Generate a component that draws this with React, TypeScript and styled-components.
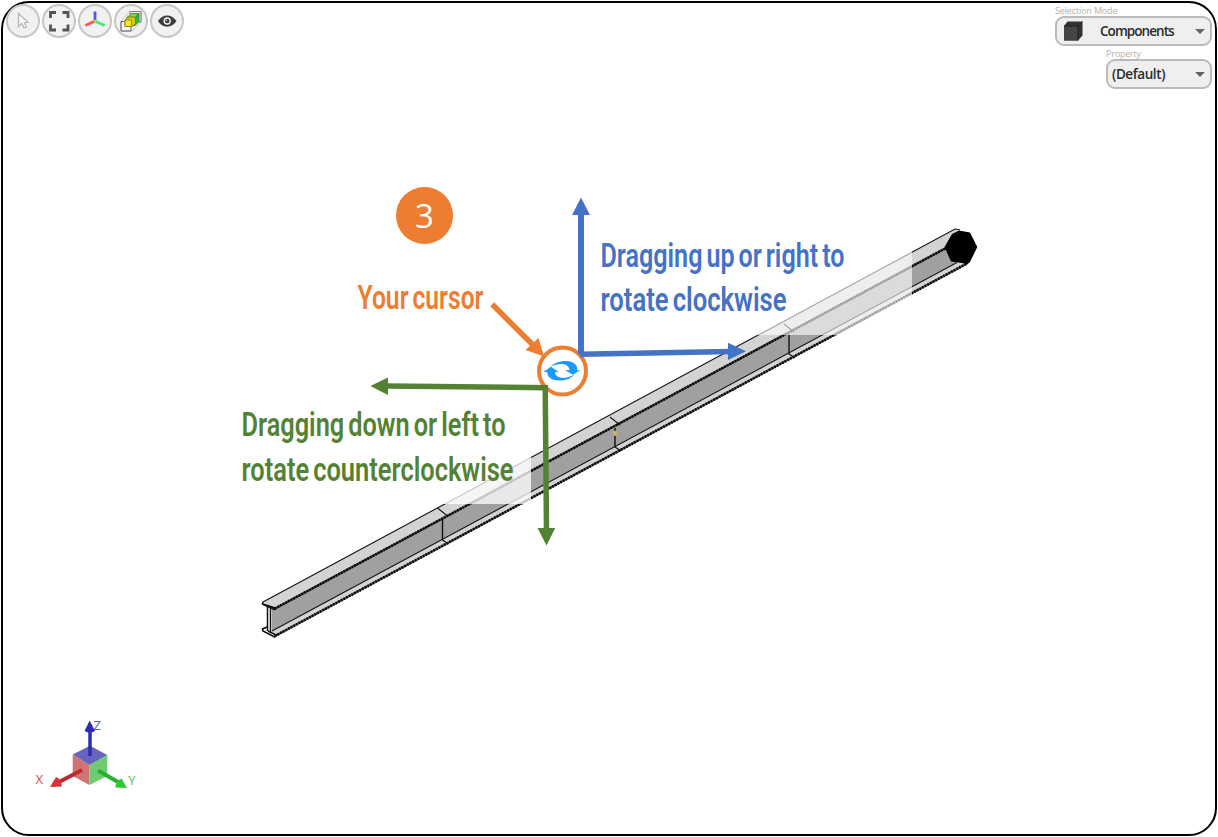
import React from "react";
import styled, { createGlobalStyle } from "styled-components";

const GlobalStyle = createGlobalStyle`
  body {
    margin: 0;
    background: #fff;
    font-family: "Open Sans", "Noto Sans", sans-serif;
  }
`;

const Page = styled.div`
  box-sizing: border-box;
  width: 1218px;
  height: 837px;
  padding: 1px;
  overflow: hidden;
`;

const Viewport = styled.main`
  position: relative;
  box-sizing: border-box;
  width: 1216px;
  height: 835px;
  border: 2px solid #000;
  border-radius: 28px;
`;

const Header = styled.header`
  position: relative;
  display: flex;
  justify-content: space-between;
  align-items: flex-start;
  padding: 2px 3px 0 3px;
`;

const Toolbar = styled.div`
  display: flex;
  gap: 2px;
  margin-top: -1px;
`;

const ToolButton = styled.button`
  box-sizing: border-box;
  width: 34px;
  height: 34px;
  padding: 0;
  border: 2px solid #c6c6c6;
  border-radius: 50%;
  background: #f1f1f1;

  svg {
    display: block;
    width: 30px;
    height: 30px;
  }
`;

const Settings = styled.div`
  display: flex;
  flex-direction: column;
  align-items: flex-end;
`;

const Field = styled.div<{ $width: number }>`
  width: ${(props) => props.$width}px;
  height: 43px;
`;

const FieldLabel = styled.div<{ $spacing: number }>`
  height: 11px;
  color: #b4b0b0;
  font-size: 9px;
  line-height: 11px;
  letter-spacing: ${(props) => props.$spacing}px;
  white-space: nowrap;
`;

const Select = styled.div`
  display: flex;
  align-items: center;
  box-sizing: border-box;
  height: 30px;
  padding: 0 5px 0 4px;
  border: 2px solid #bababa;
  border-radius: 9px;
  background: #efefef;
`;

const SelectValue = styled.span<{ $indent?: number; $spacing: number }>`
  flex: 1;
  padding-left: ${(props) => props.$indent || 0}px;
  color: #2b2b2b;
  font-size: 13.5px;
  font-weight: 600;
  line-height: 26px;
  letter-spacing: ${(props) => props.$spacing}px;
`;

const Caret = styled.span`
  border: 5px solid transparent;
  border-top-color: #666;
  border-bottom: 0;
`;

const Canvas = styled.svg`
  position: absolute;
  top: -2px;
  left: -2px;
  width: 1216px;
  height: 835px;
`;

const NoteText = styled.text`
  font-family: "Roboto", sans-serif;
  font-size: 33.5px;
  font-weight: 600;
  word-spacing: -3px;
`;

const StepNumber = styled.text`
  fill: #fff;
  font-family: "Open Sans", sans-serif;
  font-size: 33px;
  font-weight: 500;
  text-anchor: middle;
`;

const AxisLabel = styled.text`
  font-family: "Noto Sans", sans-serif;
  font-size: 13px;
`;

const ORANGE = "#ed7d31";
const BLUE = "#4472c4";
const GREEN = "#548235";

const joints = [
  { x: 442.5, top: 519, bottom: 540 },
  { x: 615, top: 428, bottom: 447 },
  { x: 789, top: 335, bottom: 354 },
];

const Note = (props: {
  x: number;
  y: number;
  width: number;
  color: string;
  children: string;
}) => (
  <NoteText
    x={props.x}
    y={props.y}
    fill={props.color}
    textLength={props.width}
    lengthAdjust="spacingAndGlyphs"
  >
    {props.children}
  </NoteText>
);

const Beam = () => (
  <g>
    <path d="M263 602L955 229L965 237L945 249L275 609Z" fill="#d3d3d3" />
    <path d="M272 609L945 249L957 263L272 631Z" fill="#a0a0a0" />
    <path d="M272 631L957 262L967 264L275 637Z" fill="#d3d3d3" />
    <g fill="none" stroke="#111" strokeWidth="1.1">
      <path d="M263 602L955 229L960 230" />
      <path d="M272 631L957 262.5" />
      <path d="M275 608.500L946 248" stroke="#333" strokeWidth="2.200" />
      <path d="M275 608.500L946 248" stroke="#000" strokeWidth="2.500" strokeDasharray="1.500 1.500" />
      <path d="M275 636L967 263.500" stroke="#444" strokeWidth="2.200" />
      <path d="M275 636L967 263.500" stroke="#000" strokeWidth="2.600" strokeDasharray="1.500 1.500" />
      <path d="M263 602L262.500 604L274 609.500L276 609M263 604L275 608" strokeWidth="1.6" />
      <path d="M267.500 606V631M270.500 608V632" strokeWidth="1.5" />
      <path d="M267 627L262.500 629L263 631L274.500 637L276 635L268 631" strokeWidth="1.6" />
      {joints.map(({ x, top, bottom }) => (
        <React.Fragment key={x}>
          <path d={`M${x - 5} ${top - 11}L${x + 5} ${top - 3}`} />
          <path d={`M${x} ${top}V${bottom}L${x + 6} ${bottom + 4}`} strokeWidth="1.4" />
        </React.Fragment>
      ))}
    </g>
    <path d="M614.500 431V436" stroke="#a0a0a0" strokeWidth="3" />
    <circle cx="615" cy="433" r="2.200" fill="#d9b15b" />
    <path d="M944.500 247L952 234L959 230.500L970 232.500L977.300 247L970 262L967 264.500L962 263L951 261.500Z" />
  </g>
);

const AxisCube = () => (
  <g>
    <path d="M72.700 754.500L89.500 765V785L72.700 776Z" fill="#cf7474" />
    <path d="M107.300 755L89.500 765V785L107.300 776Z" fill="#70cb70" />
    <path d="M72.700 754.500L90 745.700L107.300 755L89.500 765Z" fill="#6565bd" />
    <path d="M90 756V731" stroke="#2c2cb6" strokeWidth="3.500" />
    <path d="M89.700 720.500L84.500 731Q90 734 95 731Z" fill="#2c2cb6" />
    <path d="M82 770L60 781.500" stroke="#bd2b2f" strokeWidth="4" />
    <path d="M50 787L56 777Q61 779 62 786.500Z" fill="#d83437" />
    <path d="M98 770.500L118 782" stroke="#2aaf31" strokeWidth="4" />
    <path d="M127 788L121.500 778.500Q115.500 781 115.500 787.500Z" fill="#2bc934" />
    <AxisLabel x="35.500" y="783.500" fill="#dc5555">X</AxisLabel>
    <AxisLabel x="93.500" y="729.500" fill="#5555cc">Z</AxisLabel>
    <AxisLabel x="128" y="784.500" fill="#55d255">Y</AxisLabel>
  </g>
);

const Annotations = () => (
  <g>
    <rect x="590" y="228" width="322" height="107" fill="#fff" opacity="0.62" />
    <rect x="231" y="397" width="300" height="107" fill="#fff" opacity="0.76" />

    <circle cx="424.500" cy="215.500" r="28.500" fill={ORANGE} />
    <StepNumber x="424.500" y="228">3</StepNumber>

    <circle cx="562.500" cy="371" r="23.500" fill="#fff" stroke={ORANGE} strokeWidth="4" />
    <path d="M492.200 304.300L534 346" stroke={ORANGE} strokeWidth="5.500" />
    <path d="M544 356.500L525.500 350L538.500 338Z" fill={ORANGE} />
    <g fill="#189aff">
      <path d="M550.700 366.800C555 361 570 358.500 575.500 364.500C577 366.500 577.200 368 577 370.200L580.500 370L573 374.800L565 370.300L569.500 370C569 363.500 559.500 362 550.700 366.800Z" />
      <path d="M574.500 374.500C570 381 554 383 549 377C547.500 375 547.500 374 547.300 372.200L543.500 372L551 366.800L558.500 372L555 372.300C555.500 378.500 565 380 574.500 374.500Z" />
    </g>

    <path d="M581 212V354" stroke={BLUE} strokeWidth="6" />
    <path d="M580 354.200L731 351.500" stroke={BLUE} strokeWidth="5.500" />
    <path d="M581 197.500L590 215H572ZM746 351.200L728 360V342.700Z" fill={BLUE} />
    <path d="M548 387.700L386 386" stroke={GREEN} strokeWidth="5.500" />
    <path d="M545.200 386L546.500 530" stroke={GREEN} strokeWidth="5.500" />
    <path d="M370.300 386L388 377.500V395ZM546.500 545.500L537.500 528H555.200Z" fill={GREEN} />

    <Note x={357.5} y={309} width={126} color={ORANGE}>Your cursor</Note>
    <Note x={600.5} y={266.5} width={244} color={BLUE}>Dragging up or right to</Note>
    <Note x={600.5} y={311} width={186} color={BLUE}>rotate clockwise</Note>
    <Note x={241.5} y={436} width={264} color={GREEN}>Dragging down or left to</Note>
    <Note x={241.5} y={481} width={272} color={GREEN}>rotate counterclockwise</Note>
  </g>
);

const PointerIcon = () => (
  <svg viewBox="0 0 30 30">
    <path
      d="M10.500 7.500V20.500L13.800 17.500L16 22L18.500 21L16.500 16.700L20 16.300Z"
      fill="#f8f8f8"
      stroke="#b5b5b5"
      strokeWidth="1.300"
    />
  </svg>
);

const FitIcon = () => (
  <svg viewBox="0 0 30 30" fill="none" stroke="#555" strokeWidth="2.800">
    <path d="M6.500 12V6.500H12M18.500 6.500H24V12M24 18.500V24H18.500M12 24H6.500V18.500" />
  </svg>
);

const AxesIcon = () => (
  <svg viewBox="0 0 30 30" fill="none" strokeWidth="2.800">
    <path d="M15 5.500V15" stroke="#5454f5" />
    <path d="M15 15L5.500 19.500" stroke="#ff5656" />
    <path d="M15 15L24.500 19.500" stroke="#43ef68" />
    <circle cx="15" cy="15" r="1.300" fill="#ddc652" />
  </svg>
);

const BoxIcon = () => (
  <svg viewBox="0 0 30 30" strokeWidth="0.900">
    <path d="M5 15L14 5.500H25V16L16 25H5Z" fill="#f5f5f5" stroke="#bbb" />
    <path d="M14 9V5.500H25V16H22" fill="none" stroke="#777" />
    <path d="M10 12.500L15.500 7.500H23L18.500 12.500Z" fill="#7bdc45" stroke="#597936" />
    <path d="M18.500 12.500L23 7.500V15.500L18.500 20Z" fill="#24bd35" stroke="#34853a" />
    <path d="M9 14L12 11H19.500V17.500L16.500 20.500H9Z" fill="#d7c817" stroke="#777220" />
    <path d="M9 14H15.500V20.500H9Z" fill="#f7e62b" stroke="#8c8523" />
    <path d="M8.500 15.500H5V25H15V21" fill="none" stroke="#555" />
  </svg>
);

const EyeIcon = () => (
  <svg viewBox="0 0 30 30">
    <path d="M6 15C10 7.500 20 7.500 24.500 15C20 22.500 10 22.500 6 15Z" fill="#3d3d3d" />
    <circle cx="15.200" cy="15" r="3.700" fill="#eee" />
    <circle cx="15.200" cy="15" r="2.300" fill="#3d3d3d" />
    <circle cx="14.500" cy="14.300" r="0.800" fill="#ccc" />
  </svg>
);

const ComponentIcon = () => (
  <svg width="22" height="22" viewBox="0 0 22 22">
    <path d="M3 6L6.500 1.500H21.500V15.500L17 20.500H3Z" fill="#333" />
    <path d="M3 6H17V20.500H3Z" fill="#454545" />
    <path d="M3 6H17V20.500M17 6L21.500 1.500" fill="none" stroke="#202020" />
  </svg>
);

const tools = [
  { name: "Select", Icon: PointerIcon },
  { name: "Fit view", Icon: FitIcon },
  { name: "Axes", Icon: AxesIcon },
  { name: "Section box", Icon: BoxIcon },
  { name: "Visibility", Icon: EyeIcon },
];

const App = () => (
  <>
    <GlobalStyle />
    <Page>
      <Viewport>
        <Canvas viewBox="1 1 1216 835">
          <Beam />
          <AxisCube />
          <Annotations />
        </Canvas>
        <Header>
          <Toolbar>
            {tools.map(({ name, Icon }) => (
              <ToolButton key={name} aria-label={name}>
                <Icon />
              </ToolButton>
            ))}
          </Toolbar>
          <Settings>
            <Field $width={157}>
              <FieldLabel $spacing={-0.15}>Selection Mode</FieldLabel>
              <Select>
                <ComponentIcon />
                <SelectValue $indent={17} $spacing={-0.95}>Components</SelectValue>
                <Caret />
              </Select>
            </Field>
            <Field $width={106}>
              <FieldLabel $spacing={-0.2}>Property</FieldLabel>
              <Select>
                <SelectValue $spacing={-0.4}>(Default)</SelectValue>
                <Caret />
              </Select>
            </Field>
          </Settings>
        </Header>
      </Viewport>
    </Page>
  </>
);

export default App;
